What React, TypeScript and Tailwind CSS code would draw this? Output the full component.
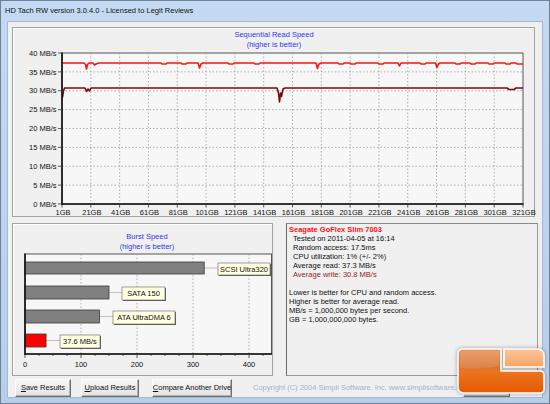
import React from "react";

const FONT = "'Liberation Sans', Arial, sans-serif";

// top chart geometry (page coordinates)
const PX0 = 62;
const PX1 = 523;
const PY0 = 53;
const PY1 = 204;
const yOf = (v: number) => PY1 - (v * (PY1 - PY0)) / 40;
const xStep = (PX1 - PX0) / 16;

type Pt = [number, number];

const readLine: Pt[] = [
  [62, 63], [84, 63], [85.5, 64.5], [86.5, 69], [87.5, 64.5], [89, 63],
  [93, 63], [94.5, 65], [96, 64], [99, 63], [161, 63], [162, 64], [166, 64], [167, 63],
  [181, 63], [182, 64], [186, 64], [187, 63], [198, 63], [199.5, 68], [201, 64], [203, 63],
  [228, 63], [229, 64], [233, 64], [234, 63], [254, 63], [255, 64], [259, 64], [260, 63],
  [316, 63], [317.5, 68.5], [319, 64], [321, 63], [338, 63], [339, 64], [343, 64], [344, 63],
  [350, 63], [351, 64], [355, 64], [356, 63], [378, 63], [379, 64], [383, 64], [384, 63],
  [398, 63], [399.5, 66], [401, 63], [420, 63], [421, 64], [425, 64], [426, 63],
  [435.5, 63], [437, 67.5], [438.5, 64], [440, 63], [455, 63], [456, 64], [460, 64], [461, 63],
  [470, 63], [471, 64], [475, 64], [476, 63], [488, 63], [489, 64], [493, 64], [494, 63],
  [505, 63], [506, 64], [510, 64], [511, 63], [516, 63], [517, 64], [523, 64],
];

const writeLine: Pt[] = [
  [62.5, 97.5], [63.5, 91], [64.5, 88], [85, 88], [86.5, 91.5], [88, 89], [89.5, 91], [91, 88],
  [277, 88], [278.5, 93], [279.5, 102], [280.5, 93], [281.5, 96.5], [283, 89], [285, 88],
  [507, 88], [509, 89.5], [514, 89.5], [516, 88], [523, 88],
];

const pts = (p: Pt[]) => p.map(([x, y]) => `${x},${y}`).join(" ");

function SeqChart() {
  return (
    <svg width={521} height={188} viewBox="13 28 521 188" fontFamily={FONT} className="block overflow-visible">
      <text x={274} y={37} textAnchor="middle" fontSize={7.5} fill="#3535e8">
        Sequential Read Speed
      </text>
      <text x={274} y={46.5} textAnchor="middle" fontSize={7.5} fill="#3535e8">
        (higher is better)
      </text>
      <rect x={PX0} y={PY0} width={PX1 - PX0} height={PY1 - PY0} fill="#f7f7f7" stroke="#555" strokeWidth={1} />
      {Array.from({ length: 7 }, (_, i) => (
        <line key={"h" + i} x1={PX0} x2={PX1} y1={yOf((i + 1) * 5)} y2={yOf((i + 1) * 5)} stroke="#9c9c9c" strokeDasharray="1.5 2" strokeWidth={0.8} />
      ))}
      {Array.from({ length: 15 }, (_, i) => (
        <line key={"v" + i} x1={PX0 + (i + 1) * xStep} x2={PX0 + (i + 1) * xStep} y1={PY0} y2={PY1} stroke="#9c9c9c" strokeDasharray="1.5 2" strokeWidth={0.8} />
      ))}
      <polyline points={pts(writeLine)} fill="none" stroke="#7c0a0a" strokeWidth={1.6} strokeLinejoin="round" />
      <polyline points={pts(readLine)} fill="none" stroke="#f01818" strokeWidth={1.6} strokeLinejoin="round" />
      <line x1={PX0} x2={PX0} y1={PY0 - 0.5} y2={PY1 + 1} stroke="#111" strokeWidth={1.6} />
      <line x1={PX0} x2={PX1 + 0.5} y1={PY1} y2={PY1} stroke="#111" strokeWidth={1.6} />
      {Array.from({ length: 9 }, (_, i) => {
        const y = yOf(i * 5);
        return (
          <g key={"yl" + i}>
            <line x1={58} x2={PX0} y1={y} y2={y} stroke="#333" strokeWidth={0.8} />
            <text x={56.5} y={y + 2.7} textAnchor="end" fontSize={7.5} fill="#111">
              {i * 5} MB/s
            </text>
          </g>
        );
      })}
      {Array.from({ length: 17 }, (_, i) => {
        const x = PX0 + i * xStep;
        return (
          <g key={"xl" + i}>
            <line x1={x} x2={x} y1={PY1} y2={PY1 + 3.5} stroke="#333" strokeWidth={0.8} />
            <text x={x + 1} y={214.5} textAnchor="middle" fontSize={7.5} fill="#111">
              {1 + i * 20}GB
            </text>
          </g>
        );
      })}
    </svg>
  );
}

const bx = (v: number) => 25 + v * 0.56;

const bars = [
  { y: 262, h: 12, v: 320, label: "SCSI Ultra320", lx: 218, lw: 52, fill: "#808080" },
  { y: 286, h: 13, v: 150, label: "SATA 150", lx: 122, lw: 43, fill: "#808080" },
  { y: 310, h: 13, v: 133, label: "ATA UltraDMA 6", lx: 113, lw: 62, fill: "#808080" },
  { y: 334, h: 13, v: 37.6, label: "37.6 MB/s", lx: 60, lw: 40, fill: "#ff0000" },
];

function BurstChart() {
  return (
    <svg width={259} height={151} viewBox="13 224 259 151" fontFamily={FONT} className="block overflow-visible">
      <text x={147} y={239} textAnchor="middle" fontSize={7.5} fill="#3535e8">
        Burst Speed
      </text>
      <text x={147} y={248.5} textAnchor="middle" fontSize={7.5} fill="#3535e8">
        (higher is better)
      </text>
      <rect x={25} y={254} width={246.5} height={100} fill="#f7f7f7" stroke="#555" strokeWidth={1} />
      {[100, 200, 300, 400].map((v) => (
        <line key={v} x1={bx(v)} x2={bx(v)} y1={254} y2={354} stroke="#9c9c9c" strokeDasharray="1.5 2" strokeWidth={0.8} />
      ))}
      {bars.map((b) => (
        <g key={b.label}>
          <line x1={bx(b.v)} x2={b.lx} y1={b.y + b.h / 2} y2={b.y + b.h / 2} stroke="#b0b0b0" strokeWidth={0.8} />
          <rect x={25} y={b.y} width={bx(b.v) - 25} height={b.h} fill={b.fill} stroke="#3a3a3a" strokeWidth={0.8} />
          <rect x={b.lx + 1} y={b.y + 2} width={b.lw} height={b.h} fill="#555" />
          <rect x={b.lx} y={b.y + 1} width={b.lw} height={b.h} fill="#ffffe1" stroke="#777" strokeWidth={0.7} />
          <text x={b.lx + b.lw / 2} y={b.y + b.h / 2 + 3.7} textAnchor="middle" fontSize={7.5} fill="#111">
            {b.label}
          </text>
        </g>
      ))}
      <line x1={25} x2={25} y1={253.5} y2={355} stroke="#111" strokeWidth={1.6} />
      <line x1={25} x2={272} y1={354} y2={354} stroke="#111" strokeWidth={1.6} />
      {Array.from({ length: 18 }, (_, i) => {
        const x = 25 + i * 14;
        const major = i % 4 === 0;
        return <line key={"t" + i} x1={x} x2={x} y1={354} y2={major ? 358 : 356} stroke="#333" strokeWidth={0.8} />;
      })}
      {[0, 100, 200, 300, 400].map((v) => (
        <text key={"l" + v} x={bx(v)} y={367} textAnchor="middle" fontSize={7.5} fill="#111">
          {v}
        </text>
      ))}
    </svg>
  );
}

function Logo() {
  return (
    <svg width={92} height={50} viewBox="0 0 92 50" className="absolute left-[454px] top-[345px] drop-shadow-[0_0_2px_rgba(0,0,0,0.35)]">
      <defs>
        <linearGradient id="lrMain" x1="0" y1="0" x2="0" y2="1">
          <stop offset="0" stopColor="#e9935f" />
          <stop offset="0.42" stopColor="#d8742f" />
          <stop offset="0.5" stopColor="#ee7420" />
          <stop offset="1" stopColor="#e25a00" />
        </linearGradient>
        <linearGradient id="lrSmall" x1="0" y1="0" x2="0" y2="1">
          <stop offset="0" stopColor="#fcc49a" />
          <stop offset="1" stopColor="#f6a566" />
        </linearGradient>
      </defs>
      <path
        d="M8 3 H46 V25 H85 Q89 25 89 29 V43 Q89 47 85 47 H9 Q3 47 3 41 V8 Q3 3 8 3 Z"
        fill="url(#lrMain)"
        stroke="#fff"
        strokeWidth={1.6}
      />
      <path d="M49 3 H82 Q89 3 89 10 V21 H49 Z" fill="url(#lrSmall)" stroke="#fff" strokeWidth={1.6} />
      <path d="M5 8 Q5 5 8 5 H44 V20 Q24 24 5 22 Z" fill="#fff" opacity={0.12} />
    </svg>
  );
}

function WinButton({ w, children }: { w: string; children?: React.ReactNode }) {
  return (
    <div
      className={`${w} h-[18px] shrink-0 flex items-center justify-center bg-gradient-to-b from-[#f7f7f7] to-[#e4e4e4] border border-t-[#fdfdfd] border-l-[#fdfdfd] border-r-[#6e6e6e] border-b-[#6e6e6e] shadow-[inset_-1px_-1px_0_#b4b4b4] text-[7.5px] text-[#111] whitespace-nowrap`}
    >
      {children}
    </div>
  );
}

export default function App() {
  return (
    <div className="relative w-[550px] h-[404px] overflow-hidden flex flex-col bg-gradient-to-b from-[#c3daf2] to-[#b6cfe9] border border-[#6f8196] font-['Liberation_Sans',Arial,sans-serif]">
      <div className="h-[20px] px-[4px] flex items-center text-[7.5px] text-[#111]">
        HD Tach RW version 3.0.4.0 - Licensed to Legit Reviews
      </div>
      <div className="mx-[6px] h-[377px] border border-[#a6b9d0] bg-[#f0f0f0] flex flex-col">
        <div className="ml-[4px] mt-[5px] w-[523px] h-[190px] border border-[#a3a3a3] shadow-[inset_1px_1px_0_#ffffff]">
          <SeqChart />
        </div>
        <div className="ml-[4px] mt-[6px] h-[153px] flex">
          <div className="w-[261px] h-[153px] border border-[#a3a3a3] shadow-[inset_1px_1px_0_#ffffff]">
            <BurstChart />
          </div>
          <div className="ml-[13px] w-[252px] h-[153px] border border-[#9a9a9a] border-l-[#6a6a6a] border-t-[#8a8a8a] px-[2px] pt-[1px] text-[7.5px] leading-[9px] text-[#111]">
            <div className="font-bold text-[#ff1010]">Seagate GoFlex Slim 7003</div>
            <div className="pl-[4px]">
              <div>Tested on 2011-04-05 at 16:14</div>
              <div>Random access: 17.5ms</div>
              <div>CPU utilization: 1% (+/- 2%)</div>
              <div>Average read: 37.3 MB/s</div>
              <div className="text-[#9a1c1c]">Average write: 30.8 MB/s</div>
            </div>
            <div className="mt-[9px]">
              <div>Lower is better for CPU and random access.</div>
              <div>Higher is better for average read.</div>
              <div>MB/s = 1,000,000 bytes per second.</div>
              <div>GB = 1,000,000,000 bytes.</div>
            </div>
          </div>
        </div>
        <div className="mt-[3px] flex items-center">
          <div className="ml-[7px]">
            <WinButton w="w-[56px]">
              <u>S</u>ave Results
            </WinButton>
          </div>
          <div className="ml-[10px]">
            <WinButton w="w-[58px]">
              <u>U</u>pload Results
            </WinButton>
          </div>
          <div className="ml-[13px]">
            <WinButton w="w-[80px]">
              <u>C</u>ompare Another Drive
            </WinButton>
          </div>
          <div className="ml-[21px] w-[210px] shrink-0 whitespace-nowrap text-[7.5px] text-[#a3b3cb]">
            Copyright (C) 2004 Simpli Software, Inc. www.simplisoftware.com
          </div>
          <WinButton w="w-[47px]" />
        </div>
      </div>
      <Logo />
    </div>
  );
}
